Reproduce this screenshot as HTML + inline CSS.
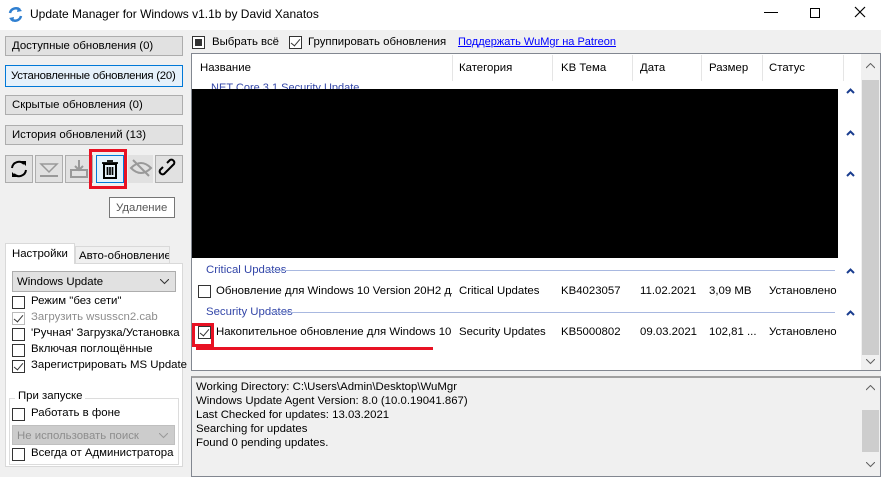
<!DOCTYPE html><html><head><meta charset="utf-8"><style>
*{margin:0;padding:0;box-sizing:border-box}
body{width:881px;height:477px;background:#f0f0f0;font-family:"Liberation Sans",sans-serif;font-size:11.4px;color:#000;position:relative;overflow:hidden}
.a{position:absolute;white-space:nowrap}
.btn{position:absolute;left:5px;width:178px;height:20px;background:#e1e1e1;border:1px solid #adadad;padding:3px 0 0 6px;white-space:nowrap;overflow:hidden}
.ib{position:absolute;top:155px;width:28px;height:28px;background:#e1e1e1;border:1px solid #adadad}
.cb{position:absolute;width:13px;height:13px;border:1px solid #333;background:#fff}
.ck::after{content:"";position:absolute;left:3px;top:0px;width:4px;height:8px;border:solid #333;border-width:0 1.5px 1.5px 0;transform:rotate(40deg)}
.hd{position:absolute;top:62px}
.sep{position:absolute;top:55px;width:1px;height:26px;background:#e5e5e5}
.chev{position:absolute;width:9px;height:6px}
</style></head><body>
<div class="a" style="left:0;top:0;width:881px;height:30px;background:#fff"></div>
<svg class="a" style="left:7px;top:6px" width="17" height="17" viewBox="0 0 17 17"><path d="M3 7a6 6 0 0 1 10-3" stroke="#2f7fd0" stroke-width="2.5" fill="none"/><path d="M14 10a6 6 0 0 1-10 3" stroke="#2f7fd0" stroke-width="2.5" fill="none"/><path d="M11 1l4 4-5 1z M6 16l-4-4 5-1z" fill="#2f7fd0"/></svg>
<div class="a" style="left:30px;top:7px;font-size:12px">Update Manager for Windows v1.1b by David Xanatos</div>
<div class="a" style="left:764px;top:12px;width:14px;height:1px;background:#000"></div>
<div class="a" style="left:810px;top:8px;width:10px;height:10px;border:1px solid #000"></div>
<svg class="a" style="left:854px;top:6px" width="12" height="12"><path d="M1 1l10 10M11 1L1 11" stroke="#000" stroke-width="1.2"/></svg>

<div class="btn" style="top:36px">Доступные обновления (0)</div>
<div class="btn" style="top:65px;background:#e5f1fb;border:1px solid #0078d7;height:22px;padding-top:4px;padding-left:5px;letter-spacing:-0.25px">Установленные обновления (20)</div>
<div class="btn" style="top:95px">Скрытые обновления (0)</div>
<div class="btn" style="top:125px">История обновлений (13)</div>

<div class="ib" style="left:5px"><svg width="26" height="26" viewBox="0 0 26 26"><path d="M6 12a7 7 0 0 1 12-4" stroke="#000" stroke-width="2" fill="none"/><path d="M20 14a7 7 0 0 1-12 4" stroke="#000" stroke-width="2" fill="none"/><path d="M15 5h5v5z M11 21H6v-5z" fill="#000"/></svg></div>
<div class="ib" style="left:35px"><svg width="26" height="26"><path d="M5 8h16l-8 8z" stroke="#999" fill="none" stroke-width="1.5"/><path d="M4 20h18" stroke="#999" stroke-width="2"/></svg></div>
<div class="ib" style="left:65px"><svg width="26" height="26"><path d="M13 4v9M9 10l4 4 4-4" stroke="#999" stroke-width="2" fill="none"/><rect x="5" y="14" width="16" height="7" fill="none" stroke="#999" stroke-width="2"/></svg></div>
<div class="ib" style="left:96px;width:28px;background:#e5f1fb;border-color:#0078d7"><svg width="26" height="26"><rect x="7" y="8" width="12" height="14" fill="none" stroke="#000" stroke-width="2"/><path d="M5 7h16M10 5h6M10.5 11v8M13 11v8M15.5 11v8" stroke="#000" stroke-width="1.7"/></svg></div>
<div class="a" style="left:89px;top:149px;width:38px;height:40px;border:3px solid #e81123"></div>
<div class="ib" style="left:128px;width:25px;border:none"><svg width="26" height="26"><path d="M3 13q10-10 20 0q-10 10-20 0z" fill="none" stroke="#999" stroke-width="2"/><path d="M5 5l16 16" stroke="#999" stroke-width="2"/></svg></div>
<div class="ib" style="left:155px"><svg width="26" height="26"><path d="M11 15l-3 3a3 3 0 0 1-4-4l3-3M15 11l3-3a3 3 0 0 0-4-4l-3 3M10 16l6-6" stroke="#000" stroke-width="2" fill="none"/></svg></div>
<div class="a" style="left:109px;top:197px;width:66px;height:21px;background:#fff;border:1px solid #767676;padding:4px 0 0 6px;color:#575757">Удаление</div>

<div class="a" style="left:5px;top:263px;width:178px;height:204px;background:#fff;border:1px solid #d9d9d9"></div>
<div class="a" style="left:75px;top:246px;width:95px;height:18px;background:#f0f0f0;border:1px solid #d9d9d9;padding:3px 3px;overflow:hidden">Авто-обновление</div>
<div class="a" style="left:5px;top:243px;width:70px;height:21px;background:#fff;border:1px solid #d9d9d9;border-bottom:none;padding:4px 6px">Настройки</div>
<div class="a" style="left:12px;top:271px;width:164px;height:21px;background:#e1e1e1;border:1px solid #adadad;padding:4px 4px">Windows Update<svg style="position:absolute;right:6px;top:7px" width="9" height="6"><path d="M0 0l4.5 4.5L9 0" stroke="#333" fill="none"/></svg></div>
<div class="cb" style="left:12px;top:296px"></div><div class="a" style="left:31px;top:295px">Режим "без сети"</div>
<div class="cb ck" style="left:12px;top:312px;border-color:#bbb"></div><div class="a" style="left:31px;top:311px;color:#8d8d8d">Загрузить wsusscn2.cab</div>
<div class="cb" style="left:12px;top:328px"></div><div class="a" style="left:31px;top:327px">'Ручная' Загрузка/Установка</div>
<div class="cb" style="left:12px;top:344px"></div><div class="a" style="left:31px;top:343px">Включая поглощённые</div>
<div class="cb ck" style="left:12px;top:360px"></div><div class="a" style="left:31px;top:359px">Зарегистрировать MS Update</div>
<div class="a" style="left:9px;top:398px;width:170px;height:67px;border:1px solid #dcdcdc"></div>
<div class="a" style="left:15px;top:390px;background:#fff;padding:0 3px">При запуске</div>
<div class="cb" style="left:12px;top:408px"></div><div class="a" style="left:31px;top:407px">Работать в фоне</div>
<div class="a" style="left:12px;top:425px;width:163px;height:20px;background:#ccc;border:1px solid #bfbfbf;padding:4px 4px;color:#8d8d8d">Не использовать поиск<svg style="position:absolute;right:6px;top:7px" width="9" height="6"><path d="M0 0l4.5 4.5L9 0" stroke="#999" fill="none"/></svg></div>
<div class="cb" style="left:12px;top:448px"></div><div class="a" style="left:31px;top:447px">Всегда от Администратора</div>

<div class="cb" style="left:192px;top:36px"><div style="margin:2px;width:7px;height:7px;background:#333"></div></div>
<div class="a" style="left:212px;top:36px">Выбрать всё</div>
<div class="cb ck" style="left:289px;top:36px"></div>
<div class="a" style="left:308px;top:36px">Группировать обновления</div>
<div class="a" style="left:458px;top:36px;color:#0000ff;text-decoration:underline;font-size:11px">Поддержать WuMgr на Patreon</div>

<div class="a" style="left:191px;top:53px;width:690px;height:318px;background:#fff;border:1px solid #828790"></div>
<div class="hd" style="left:200px">Название</div><div class="hd" style="left:459px">Категория</div><div class="hd" style="left:561px">KB Тема</div><div class="hd" style="left:640px">Дата</div><div class="hd" style="left:709px">Размер</div><div class="hd" style="left:769px">Статус</div>
<div class="sep" style="left:452px"></div><div class="sep" style="left:552px"></div><div class="sep" style="left:632px"></div><div class="sep" style="left:701px"></div><div class="sep" style="left:762px"></div><div class="sep" style="left:843px"></div>
<div class="a" style="left:861px;top:54px;width:19px;height:316px;background:#f0f0f0"></div>
<div class="a" style="left:862px;top:80px;width:17px;height:275px;background:#cdcdcd"></div>
<svg class="a" style="left:866px;top:63px" width="9" height="6"><path d="M0 5l4.5-4.5L9 5" stroke="#606060" fill="none"/></svg>
<svg class="a" style="left:866px;top:359px" width="9" height="6"><path d="M0 0l4.5 4.5L9 0" stroke="#606060" fill="none"/></svg>
<div class="a" style="left:208px;top:82px;color:#3346a8;font-size:11px">.NET Core 3.1 Security Update</div>
<div class="a" style="left:192px;top:89px;width:646px;height:169px;background:#000"></div>
<svg class="chev" style="left:846px;top:88px"><path d="M1 5l3.5-3.5L8 5" stroke="#1a3d8f" stroke-width="2" fill="none"/></svg>
<svg class="chev" style="left:846px;top:130px"><path d="M1 5l3.5-3.5L8 5" stroke="#1a3d8f" stroke-width="2" fill="none"/></svg>
<svg class="chev" style="left:846px;top:171px"><path d="M1 5l3.5-3.5L8 5" stroke="#1a3d8f" stroke-width="2" fill="none"/></svg>
<svg class="chev" style="left:846px;top:268px"><path d="M1 5l3.5-3.5L8 5" stroke="#1a3d8f" stroke-width="2" fill="none"/></svg>
<svg class="chev" style="left:846px;top:310px"><path d="M1 5l3.5-3.5L8 5" stroke="#1a3d8f" stroke-width="2" fill="none"/></svg>
<div class="a" style="left:206px;top:264px;color:#3346a8">Critical Updates</div>
<div class="a" style="left:266px;top:270px;width:569px;height:1px;background:#a8b8e0"></div>
<div class="cb" style="left:198px;top:285px"></div>
<div class="a" style="left:216px;top:285px;width:236px;overflow:hidden">Обновление для Windows 10 Version 20H2 дл...</div>
<div class="a" style="left:459px;top:285px">Critical Updates</div><div class="a" style="left:561px;top:285px">KB4023057</div><div class="a" style="left:640px;top:285px">11.02.2021</div><div class="a" style="left:709px;top:285px">3,09 MB</div><div class="a" style="left:769px;top:285px">Установлено</div>
<div class="a" style="left:206px;top:306px;color:#3346a8">Security Updates</div>
<div class="a" style="left:270px;top:312px;width:565px;height:1px;background:#a8b8e0"></div>
<div class="cb ck" style="left:198px;top:326px"></div>
<div class="a" style="left:192px;top:323px;width:22px;height:24px;border:3px solid #e81123"></div>
<div class="a" style="left:216px;top:326px;width:236px;overflow:hidden">Накопительное обновление для Windows 10...</div>
<div class="a" style="left:459px;top:326px">Security Updates</div><div class="a" style="left:561px;top:326px">KB5000802</div><div class="a" style="left:640px;top:326px">09.03.2021</div><div class="a" style="left:709px;top:326px">102,81 ...</div><div class="a" style="left:769px;top:326px">Установлено</div>
<div class="a" style="left:196px;top:347px;width:237px;height:3px;background:#e81123"></div>

<div class="a" style="left:191px;top:376px;width:690px;height:101px;border:1px solid #828790;border-top:2px solid #a0a0a0;padding:2px 4px;line-height:14px;font-size:11.4px">Working Directory: C:\Users\Admin\Desktop\WuMgr<br>Windows Update Agent Version: 8.0 (10.0.19041.867)<br>Last Checked for updates: 13.03.2021<br>Searching for updates<br>Found 0 pending updates.</div>
<div class="a" style="left:862px;top:378px;width:17px;height:98px;background:#f0f0f0"></div>
<div class="a" style="left:862px;top:410px;width:17px;height:42px;background:#cdcdcd"></div>
<svg class="a" style="left:866px;top:385px" width="9" height="6"><path d="M0 5l4.5-4.5L9 5" stroke="#606060" fill="none"/></svg>
<svg class="a" style="left:866px;top:462px" width="9" height="6"><path d="M0 0l4.5 4.5L9 0" stroke="#606060" fill="none"/></svg>
</body></html>
